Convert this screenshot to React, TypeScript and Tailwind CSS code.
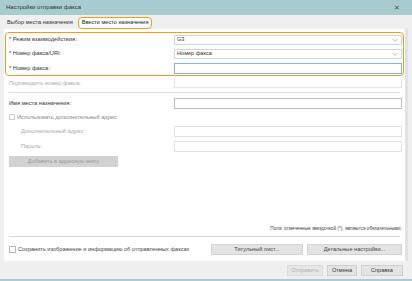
import React from "react";

const Chevron = () => (
  <svg width="6" height="4" viewBox="0 0 6 4" className="mr-[3px]">
    <path d="M0.5 0.8 L3 3.2 L5.5 0.8" fill="none" stroke="#999" strokeWidth="0.7" />
  </svg>
);

export default function App() {
  return (
    <div
      className="w-[412px] h-[281px] bg-[#efefef] flex flex-col text-[#333] overflow-hidden border-b-[2px] border-[#a9cdd2]"
      style={{ fontFamily: '"Liberation Sans", Arial, sans-serif' }}
    >
      {/* Title bar */}
      <div className="h-[15px] bg-[#a8cbd0] flex items-center justify-between pl-[6px] pr-[12px] shrink-0">
        <span className="text-[6px] text-[#333]">Настройки отправки факса</span>
        <span className="text-[7px] text-[#555] leading-none">✕</span>
      </div>
      {/* Tabs */}
      <div className="h-[13px] flex items-center pl-[7px] shrink-0 mt-[1px]">
        <span className="text-[5.6px] text-[#333] mr-[5px]">Выбор места назначения</span>
        <span className="text-[5.6px] text-[#222] border border-[#f39a22] rounded-[4px] px-[3px] h-[12px] flex items-center bg-white">
          Ввести место назначения
        </span>
      </div>
      <div className="flex flex-1 pl-[4px] pr-[4px]">
        <div className="flex-1 bg-white flex flex-col px-[1px] pt-[3px]">
          {/* Required box */}
          <div className="border-[1.5px] border-[#f39a22] rounded-[4px] flex flex-col gap-[3px] py-[1px] pl-[3px] pr-[1px]">
            <div className="flex items-center h-[11px]">
              <span className="text-[5.7px] flex-1">* Режим взаимодействия:</span>
              <div className="w-[228px] h-[10px] border border-[#d4d4d4] flex items-center justify-between pl-[2px] text-[5.6px]">
                <span>G3</span>
                <Chevron />
              </div>
            </div>
            <div className="flex items-center h-[11px]">
              <span className="text-[5.7px] flex-1">* Номер факса/URI:</span>
              <div className="w-[228px] h-[10px] border border-[#d4d4d4] flex items-center justify-between pl-[2px] text-[5.6px]">
                <span>Номер факса</span>
                <Chevron />
              </div>
            </div>
            <div className="flex items-center h-[12px]">
              <span className="text-[5.7px] flex-1">* Номер факса:</span>
              <div className="w-[228px] h-[11px] border border-[#7db7e3]" />
            </div>
          </div>
          {/* Confirm */}
          <div className="flex items-center h-[11px] mt-[2px] pl-[4px] pr-[2px]">
            <span className="text-[5.7px] flex-1 text-[#aaa]">Подтвердить номер факса:</span>
            <div className="w-[228px] h-[9px] border border-[#e4e4e4] border-t-0" />
          </div>
          <div className="h-[1px] bg-[#dedede] mx-[4px] mt-[3px]" />
          <div className="flex items-center h-[11px] mt-[5px] pl-[4px] pr-[2px]">
            <span className="text-[5.7px] flex-1 text-[#333]">Имя места назначения:</span>
            <div className="w-[228px] h-[11px] border border-[#bdbdbd]" />
          </div>
          <div className="flex items-center h-[10px] mt-[3px] pl-[4px]">
            <div className="w-[6px] h-[6px] border border-[#cfcfcf] mr-[2px]" />
            <span className="text-[5.7px] text-[#888]">Использовать дополнительный адрес</span>
          </div>
          <div className="flex items-center h-[11px] mt-[4px] pl-[16px] pr-[2px]">
            <span className="text-[5.7px] flex-1 text-[#aaa]">Дополнительный адрес:</span>
            <div className="w-[228px] h-[11px] border border-[#e2e2e2]" />
          </div>
          <div className="flex items-center h-[11px] mt-[4px] pl-[16px] pr-[2px]">
            <span className="text-[5.7px] flex-1 text-[#aaa]">Пароль:</span>
            <div className="w-[228px] h-[11px] border border-[#e2e2e2]" />
          </div>
          <div className="pl-[4px] mt-[4px]">
            <div className="w-[109px] h-[11px] bg-[#d2d2d2] flex items-center justify-center text-[5.6px] text-[#999]">
              Добавить в адресную книгу
            </div>
          </div>
          <div className="flex-1" />
          <div className="flex justify-end pr-[2px] text-[4.7px] text-[#444] mb-[4px]">
            Поля, отмеченные звездочкой (*), являются обязательными.
          </div>
          <div className="h-[1px] bg-[#d8d8d8] mx-[4px]" />
          <div className="flex items-center h-[13px] mt-[6px] mb-[5px] pl-[4px] pr-[2px]">
            <div className="w-[7px] h-[7px] border border-[#b8b8b8] mr-[2px]" />
            <span className="text-[5.6px] text-[#444] flex-1">
              Сохранить изображение и информацию об отправленных факсах
            </span>
            <div className="w-[92px] h-[11px] bg-[#e3e3e3] border border-[#d3d3d3] flex items-center justify-center text-[5.6px] text-[#444] mr-[4px]">
              Титульный лист...
            </div>
            <div className="w-[95px] h-[11px] bg-[#e3e3e3] border border-[#d3d3d3] flex items-center justify-center text-[5.6px] text-[#444]">
              Детальные настройки...
            </div>
          </div>
        </div>
        <div className="w-[3px] bg-[#e2e2e2]" />
      </div>
      {/* Bottom buttons */}
      <div className="h-[18px] flex items-center justify-end gap-[4px] pr-[9px] shrink-0">
        <div className="w-[36px] h-[11px] bg-[#e6e6e6] border border-[#dadada] flex items-center justify-center text-[5.6px] text-[#b0b0b0]">
          Отправить
        </div>
        <div className="w-[30px] h-[11px] bg-[#e3e3e3] border border-[#cfcfcf] flex items-center justify-center text-[5.6px] text-[#333]">
          Отмена
        </div>
        <div className="w-[42px] h-[11px] bg-[#e3e3e3] border border-[#cfcfcf] flex items-center justify-center text-[5.6px] text-[#333]">
          Справка
        </div>
      </div>
    </div>
  );
}
